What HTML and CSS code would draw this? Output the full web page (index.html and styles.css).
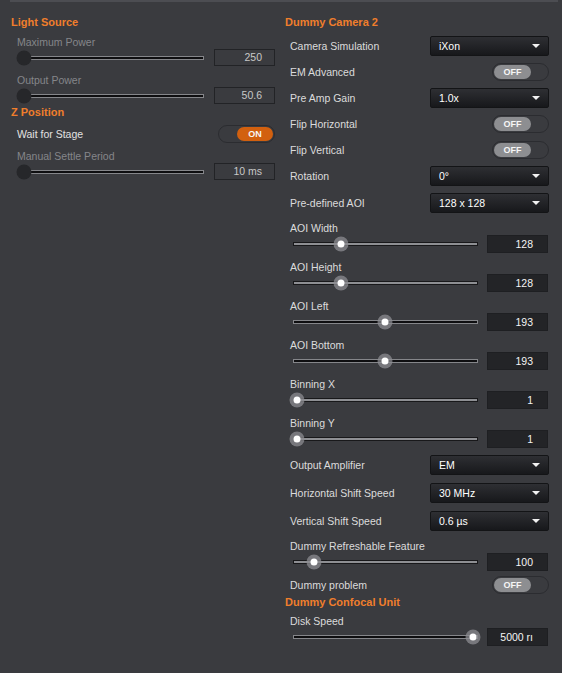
FILE: index.html
```html
<!DOCTYPE html>
<html>
<head>
<meta charset="utf-8">
<link rel="stylesheet" href="styles.css">
</head>
<body>
<div class="topbar"></div>
<div class="panel">
  <div class="col left">
    <div class="header">Light Source</div>
    <div class="sblock pt5 disabled">
      <div class="slabel">Maximum Power</div>
      <div class="srow"><div class="track dark"><span class="knob kdark" style="left:6px"></span></div><div class="vbox">250</div></div>
    </div>
    <div class="sblock pt7 disabled">
      <div class="slabel">Output Power</div>
      <div class="srow"><div class="track dark"><span class="knob kdark" style="left:6px"></span></div><div class="vbox">50.6</div></div>
    </div>
    <div class="header">Z Position</div>
    <div class="trow">
      <span class="rlabel">Wait for Stage</span>
      <div class="toggle on"><span class="pill">ON</span></div>
    </div>
    <div class="sblock pt5 disabled">
      <div class="slabel">Manual Settle Period</div>
      <div class="srow"><div class="track dark"><span class="knob kdark" style="left:6px"></span></div><div class="vbox">10 ms</div></div>
    </div>
  </div>

  <div class="col right">
    <div class="header">Dummy Camera 2</div>
    <div class="row first">
      <span class="rlabel">Camera Simulation</span>
      <div class="dropdown"><span>iXon</span><i class="arrow"></i></div>
    </div>
    <div class="row">
      <span class="rlabel">EM Advanced</span>
      <div class="toggle"><span class="pill">OFF</span></div>
    </div>
    <div class="row">
      <span class="rlabel">Pre Amp Gain</span>
      <div class="dropdown"><span>1.0x</span><i class="arrow"></i></div>
    </div>
    <div class="row">
      <span class="rlabel">Flip Horizontal</span>
      <div class="toggle"><span class="pill">OFF</span></div>
    </div>
    <div class="row">
      <span class="rlabel">Flip Vertical</span>
      <div class="toggle"><span class="pill">OFF</span></div>
    </div>
    <div class="row">
      <span class="rlabel">Rotation</span>
      <div class="dropdown"><span>0°</span><i class="arrow"></i></div>
    </div>
    <div class="row tall">
      <span class="rlabel">Pre-defined AOI</span>
      <div class="dropdown"><span>128 x 128</span><i class="arrow"></i></div>
    </div>
    <div class="sblock rs">
      <div class="slabel">AOI Width</div>
      <div class="srow"><div class="track light"><span class="knob klight" style="left:47px"></span></div><div class="vbox">128</div></div>
    </div>
    <div class="sblock rs">
      <div class="slabel">AOI Height</div>
      <div class="srow"><div class="track light"><span class="knob klight" style="left:47px"></span></div><div class="vbox">128</div></div>
    </div>
    <div class="sblock rs">
      <div class="slabel">AOI Left</div>
      <div class="srow"><div class="track dark"><span class="knob klight" style="left:91px"></span></div><div class="vbox">193</div></div>
    </div>
    <div class="sblock rs">
      <div class="slabel">AOI Bottom</div>
      <div class="srow"><div class="track dark"><span class="knob klight" style="left:91px"></span></div><div class="vbox">193</div></div>
    </div>
    <div class="sblock rs">
      <div class="slabel">Binning X</div>
      <div class="srow"><div class="track light"><span class="knob klight" style="left:3px"></span></div><div class="vbox">1</div></div>
    </div>
    <div class="sblock rs">
      <div class="slabel">Binning Y</div>
      <div class="srow"><div class="track light"><span class="knob klight" style="left:3px"></span></div><div class="vbox">1</div></div>
    </div>
    <div class="row tall">
      <span class="rlabel">Output Amplifier</span>
      <div class="dropdown"><span>EM</span><i class="arrow"></i></div>
    </div>
    <div class="row tall">
      <span class="rlabel">Horizontal Shift Speed</span>
      <div class="dropdown"><span>30 MHz</span><i class="arrow"></i></div>
    </div>
    <div class="row tall">
      <span class="rlabel">Vertical Shift Speed</span>
      <div class="dropdown"><span>0.6 µs</span><i class="arrow"></i></div>
    </div>
    <div class="sblock rs">
      <div class="slabel">Dummy Refreshable Feature</div>
      <div class="srow"><div class="track light"><span class="knob klight" style="left:20px"></span></div><div class="vbox">100</div></div>
    </div>
    <div class="row short">
      <span class="rlabel">Dummy problem</span>
      <div class="toggle"><span class="pill">OFF</span></div>
    </div>
    <div class="header small">Dummy Confocal Unit</div>
    <div class="sblock rs last">
      <div class="slabel">Disk Speed</div>
      <div class="srow"><div class="track dark"><span class="knob klight" style="left:179px"></span></div><div class="vbox">5000 rı</div></div>
    </div>
  </div>
</div>
</body>
</html>
```

FILE: styles.css
```css
html, body {
  margin: 0;
  background: #3a3b3f;
}
body {
  font-family: "Liberation Sans", Arial, sans-serif;
  font-size: 10.5px;
  color: #dcdcdc;
  width: 562px;
  height: 673px;
  overflow: hidden;
}
.topbar {
  height: 2px;
  width: 548px;
  margin-left: 10px;
  background: #4c4d52;
}
.panel {
  display: flex;
  padding-top: 12px;
}
.col {
  display: flex;
  flex-direction: column;
}
.left {
  width: 264px;
  padding-left: 11px;
}
.right {
  width: 264px;
  margin-left: 10px;
}
.header {
  height: 16px;
  line-height: 16px;
  font-size: 11px;
  font-weight: bold;
  color: #f07e2c;
}
.header.small {
  height: 12px;
  line-height: 12px;
}

/* slider blocks */
.sblock {
  display: flex;
  flex-direction: column;
}
.pt5 { padding-top: 5px; }
.pt7 { padding-top: 7px; }
.slabel {
  height: 14px;
  line-height: 14px;
  padding-left: 6px;
}
.srow {
  height: 17px;
  display: flex;
  align-items: center;
  padding-left: 7px;
}
.left .track {
  width: 185px;
  margin-right: 11px;
}
.track {
  position: relative;
  height: 2px;
}
.track.dark {
  background: #0e0e10;
  box-shadow: 0 0 0 1px #85868a;
}
.track.light {
  background: #8e8f93;
  box-shadow: 0 0 0 1px #18181a;
}
.knob {
  position: absolute;
  top: 50%;
  border-radius: 50%;
  transform: translate(-50%, -50%);
}
.kdark {
  width: 15px;
  height: 15px;
  background: #26272a;
}
.klight {
  width: 7px;
  height: 7px;
  background: #ffffff;
  box-shadow: 0 0 0 4px rgba(140, 140, 145, 0.75);
}
.vbox {
  box-sizing: border-box;
  width: 61px;
  height: 17px;
  line-height: 15px;
  border: 1px solid #222326;
  text-align: right;
  padding-right: 12px;
  color: #c8c8c8;
}
.disabled .slabel {
  color: #85868a;
}

/* right slider blocks */
.sblock.rs {
  height: 39px;
  box-sizing: border-box;
  padding-top: 4px;
}
.sblock.rs.last {
  padding-top: 6px;
}
.rs .slabel {
  padding-left: 5px;
  color: #dcdcdc;
}
.rs .srow {
  padding-left: 9px;
}
.rs .track {
  width: 183px;
  margin-right: 10px;
}
.rs .vbox {
  height: 18px;
  line-height: 16px;
  background: #232427;
  border-color: #1e1f22;
  color: #f4f4f4;
  padding-right: 14px;
}

/* rows */
.row, .trow {
  display: flex;
  align-items: center;
  justify-content: space-between;
  height: 26px;
}
.row .rlabel {
  padding-left: 5px;
}
.row.first {
  margin-top: 3px;
}
.row.tall {
  height: 28px;
}
.row.short {
  height: 22px;
}
.trow {
  height: 20px;
  margin-top: 4px;
}
.trow .rlabel {
  padding-left: 6px;
  color: #e2e2e2;
}
.dropdown {
  box-sizing: border-box;
  width: 119px;
  height: 20px;
  display: flex;
  align-items: center;
  justify-content: space-between;
  padding: 0 8px 0 8px;
  background: linear-gradient(#2e2f33, #17181b);
  border: 1px solid #131416;
  border-radius: 2px;
  color: #ffffff;
}
.arrow {
  width: 0;
  height: 0;
  border-left: 4px solid transparent;
  border-right: 4px solid transparent;
  border-top: 4px solid #f2f2f2;
}
.toggle {
  box-sizing: border-box;
  width: 57px;
  height: 18px;
  border: 1px solid #2b2c30;
  border-radius: 9px;
  display: flex;
  align-items: center;
  padding: 0 1px;
}
.pill {
  width: 37px;
  height: 14px;
  line-height: 14px;
  border-radius: 7px;
  background: #8d8e91;
  color: #f6f6f6;
  font-size: 9px;
  font-weight: bold;
  text-align: center;
}
.toggle.on {
  justify-content: flex-end;
}
.toggle.on .pill {
  width: 36px;
  background: #d2600f;
}
```
